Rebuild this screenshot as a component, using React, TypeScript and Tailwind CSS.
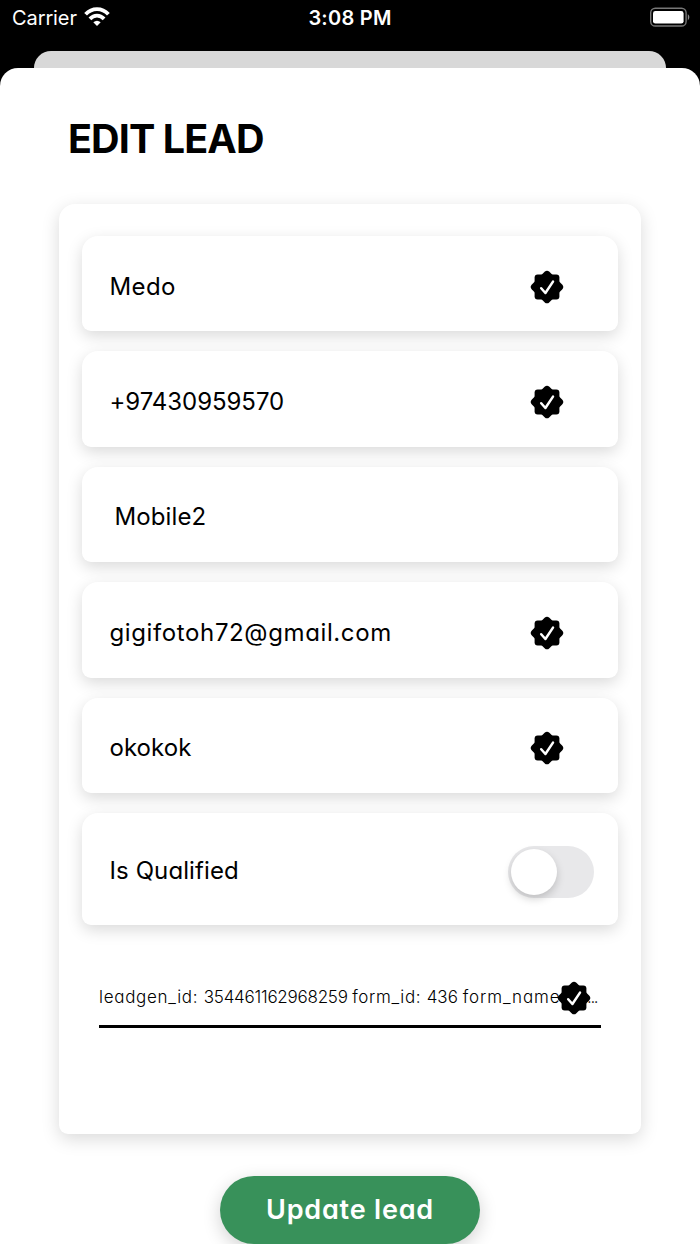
import React from "react";

function Badge({ className = "" }: { className?: string }) {
  return (
    <svg viewBox="-17 -17 34 34" className={"h-[34px] w-[34px] shrink-0 " + className}>
      <rect x="-12.4" y="-12.4" width="24.8" height="24.8" rx="3" fill="#000" />
      <rect x="-12.4" y="-12.4" width="24.8" height="24.8" rx="3.4" fill="#000" transform="rotate(45)" />
      <path d="M-5.8 1.2 -1.6 6 6-5.4" fill="none" stroke="#fff" strokeWidth="2.5" strokeLinecap="round" strokeLinejoin="round" />
    </svg>
  );
}

const rowShape =
  "flex items-center rounded-t-[16px] rounded-b-[9px] bg-white pl-[27.5px] shadow-[0_5px_16px_rgba(0,0,0,0.15)]";

const fields = [
  { text: "Medo", style: "tracking-[0.4px]", verified: true },
  { text: "+97430959570", style: "tracking-[-0.05px]", verified: true },
  { text: "Mobile2", style: "pl-[5px] tracking-[0.1px]", verified: false },
  { text: "gigifotoh72@gmail.com", style: "tracking-[0.62px]", verified: true },
  { text: "okokok", style: "tracking-[0.05px]", verified: true },
];

export default function App() {
  return (
    <div className="flex h-[1244px] w-[700px] flex-col overflow-hidden bg-black font-['Inter',sans-serif] text-black">
      <header className="grid h-[51px] shrink-0 grid-cols-3 items-start pt-[4px] text-[20px] leading-[28px] text-white">
        <div className="flex items-start pl-[12px]">
          <span className="tracking-[-0.1px]">Carrier</span>
          <svg viewBox="0 0 26 20" className="mt-[3px] ml-[7px] h-[20px] w-[26px]" fill="none" stroke="#fff" strokeWidth="3.8">
            <path d="M1.6 7.2C8 .3 18 .3 24.4 7.2" />
            <path d="M5.9 11.9C10 7.6 16 7.6 20.1 11.9" />
            <path d="M13 19 9.3 15.3Q13 12 16.7 15.3Z" fill="#fff" stroke="none" />
          </svg>
        </div>
        <div className="text-center font-semibold tracking-[0.25px]">3:08 PM</div>
        <div className="flex justify-end pt-[3px] pr-[9px]">
          <svg viewBox="0 0 42 20" className="h-[20px] w-[42px]">
            <rect x="1.7" y="1.2" width="35.4" height="17.8" rx="4.6" fill="none" stroke="#777" strokeWidth="1.4" />
            <rect x="4" y="4" width="30.6" height="12.6" rx="2.4" fill="#fff" />
            <path d="M38.8 7Q42 10 38.8 13.4Z" fill="#888" />
          </svg>
        </div>
      </header>
      <div className="mx-[34px] h-[17px] shrink-0 rounded-t-[17px] bg-[#d8d8d8]" />
      <main className="flex h-[1176px] shrink-0 flex-col items-center rounded-t-[18px] bg-white [font-feature-settings:'cv11']">
        <h1 className="mt-[46px] h-[50px] w-full pl-[68px] text-[39.5px] leading-[50px] font-bold tracking-[-0.9px] whitespace-nowrap">
          EDIT LEAD
        </h1>
        <section className="mt-[40px] flex h-[930px] w-[582px] shrink-0 flex-col rounded-t-[16px] rounded-b-[9px] bg-white px-[23px] pt-[32px] shadow-[0_5px_18px_rgba(0,0,0,0.15)]">
          <div className="flex flex-col gap-[20px] text-[24px] leading-[32px]">
            {fields.map((f) => (
              <div key={f.text} className={rowShape + " h-[95.4px] justify-between pr-[54px]"}>
                <span className={"pt-[6px] whitespace-nowrap " + f.style}>{f.text}</span>
                {f.verified && <Badge className="mt-[6px]" />}
              </div>
            ))}
            <div className={rowShape + " h-[112px] justify-between pr-[24px]"}>
              <span className="pt-[5px] tracking-[0.1px]">Is Qualified</span>
              <div className="mt-[6px] flex h-[52px] w-[86px] items-center rounded-full bg-[#e8e8ea] pl-[3px]">
                <div className="h-[46px] w-[46px] rounded-full bg-white shadow-[0_4px_9px_rgba(0,0,0,0.18)]" />
              </div>
            </div>
          </div>
          <div className="relative mx-[17px] mt-[55px] h-[48.4px] border-b-[3px] border-black">
            <p className="pt-[4px] text-[17px] leading-[26px] font-light whitespace-nowrap">
              <span className="tracking-[0.7px]">leadgen_id: </span>
              <span className="tracking-[-0.25px]">354461162968259 </span>
              <span className="tracking-[0.65px]">form_id: </span>
              <span>436 </span>
              <span className="tracking-[0.9px]">form_name: a</span>
              <span className="pl-[4px] tracking-[-1.4px]">...</span>
            </p>
            <Badge className="absolute top-[1px] right-[10px]" />
          </div>
        </section>
        <button className="mt-[42px] flex h-[68px] w-[260px] shrink-0 items-center justify-center rounded-full bg-[#38915a] text-[27px] font-semibold tracking-[0.8px] whitespace-nowrap text-white shadow-[0_5px_18px_rgba(0,0,0,0.18)]">
          Update lead
        </button>
      </main>
    </div>
  );
}
